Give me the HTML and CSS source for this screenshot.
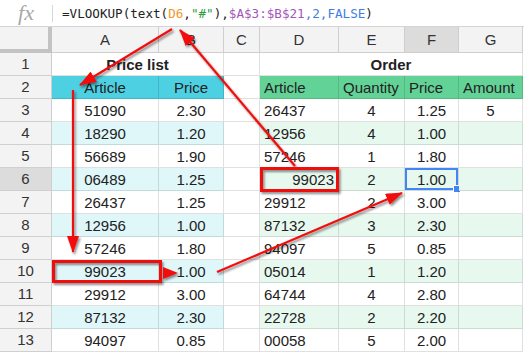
FILE: index.html
```html
<!DOCTYPE html>
<html lang="en">
<head>
  <meta charset="UTF-8">
  <title>VLOOKUP with text()</title>
  <link rel="stylesheet" href="styles.css">
</head>
<body>
<div class="sheet">
  <div class="formula-bar">
    <div class="fx">fx</div>
    <div class="sep"></div>
    <div class="formula">=VLOOKUP(text(<span class="f-ref">D6</span>,<span class="f-str">"#"</span>),<span class="f-range">$A$3:$B$21</span><span class="f-num">,2,FALSE</span>)</div>
  </div>

  <div class="grid">
    <div class="corner"></div>
    <div class="ch">A</div><div class="ch">B</div><div class="ch">C</div><div class="ch">D</div>
    <div class="ch">E</div><div class="ch sel">F</div><div class="ch">G</div>

    <div class="rh">1</div>
    <div class="c title span2">Price list</div><div class="c"></div>
    <div class="c title span4">Order</div>

    <div class="rh">2</div>
    <div class="c pl-head mid">Article</div><div class="c pl-head mid">Price</div><div class="c"></div>
    <div class="c or-head">Article</div><div class="c or-head">Quantity</div><div class="c or-head">Price</div><div class="c or-head">Amount</div>

    <div class="rh">3</div>
    <div class="c mid">51090</div><div class="c mid">2.30</div><div class="c"></div>
    <div class="c">26437</div><div class="c mid">4</div><div class="c mid">1.25</div><div class="c mid">5</div>

    <div class="rh">4</div>
    <div class="c pl-alt mid">18290</div><div class="c pl-alt mid">1.20</div><div class="c"></div>
    <div class="c or-alt">12956</div><div class="c or-alt mid">4</div><div class="c or-alt mid">1.00</div><div class="c or-alt"></div>

    <div class="rh">5</div>
    <div class="c mid">56689</div><div class="c mid">1.90</div><div class="c"></div>
    <div class="c">57246</div><div class="c mid">1</div><div class="c mid">1.80</div><div class="c"></div>

    <div class="rh sel">6</div>
    <div class="c pl-alt mid">06489</div><div class="c pl-alt mid">1.25</div><div class="c"></div>
    <div class="c or-alt end">99023</div><div class="c or-alt mid">2</div><div class="c or-alt mid active">1.00<span class="handle"></span></div><div class="c or-alt"></div>

    <div class="rh">7</div>
    <div class="c mid">26437</div><div class="c mid">1.25</div><div class="c"></div>
    <div class="c">29912</div><div class="c mid">2</div><div class="c mid">3.00</div><div class="c"></div>

    <div class="rh">8</div>
    <div class="c pl-alt mid">12956</div><div class="c pl-alt mid">1.00</div><div class="c"></div>
    <div class="c or-alt">87132</div><div class="c or-alt mid">3</div><div class="c or-alt mid">2.30</div><div class="c or-alt"></div>

    <div class="rh">9</div>
    <div class="c mid">57246</div><div class="c mid">1.80</div><div class="c"></div>
    <div class="c">94097</div><div class="c mid">5</div><div class="c mid">0.85</div><div class="c"></div>

    <div class="rh">10</div>
    <div class="c pl-alt mid">99023</div><div class="c pl-alt mid">1.00</div><div class="c"></div>
    <div class="c or-alt">05014</div><div class="c or-alt mid">1</div><div class="c or-alt mid">1.20</div><div class="c or-alt"></div>

    <div class="rh">11</div>
    <div class="c mid">29912</div><div class="c mid">3.00</div><div class="c"></div>
    <div class="c">64744</div><div class="c mid">4</div><div class="c mid">2.80</div><div class="c"></div>

    <div class="rh">12</div>
    <div class="c pl-alt mid">87132</div><div class="c pl-alt mid">2.30</div><div class="c"></div>
    <div class="c or-alt">22728</div><div class="c or-alt mid">2</div><div class="c or-alt mid">2.20</div><div class="c or-alt"></div>

    <div class="rh">13</div>
    <div class="c mid">94097</div><div class="c mid">0.85</div><div class="c"></div>
    <div class="c">00058</div><div class="c mid">5</div><div class="c mid">2.00</div><div class="c"></div>
  </div>

  <!-- red callouts drawn over the sheet -->
  <svg class="notes" width="524" height="353" viewBox="0 0 524 353">
    <defs>
      <filter id="shadow" x="-20%" y="-20%" width="140%" height="140%">
        <feDropShadow dx="1.5" dy="2" stdDeviation="1.2" flood-color="#000" flood-opacity="0.45"/>
      </filter>
      <marker id="head" markerUnits="userSpaceOnUse" markerWidth="18" markerHeight="12" refX="16" refY="6" orient="auto">
        <path d="M0,0 L17,6 L0,12 Z" fill="#f20c0c"/>
      </marker>
    </defs>
    <g filter="url(#shadow)">
      <line x1="133" y1="24" x2="217" y2="24" stroke="#1212d0" stroke-width="2.5"/>
    </g>
    <g filter="url(#shadow)" stroke="#f20c0c" stroke-width="2.2" fill="none">
      <line x1="172" y1="29" x2="80" y2="85" marker-end="url(#head)"/>
      <line x1="295" y1="166" x2="180" y2="30" marker-end="url(#head)"/>
      <line x1="73" y1="90" x2="73" y2="252" marker-end="url(#head)"/>
      <line x1="217" y1="272" x2="402" y2="193" marker-end="url(#head)"/>
      <rect x="53.5" y="261.5" width="107" height="20" stroke-width="3"/>
      <rect x="261.5" y="168.5" width="76" height="22" stroke-width="3"/>
      <path d="M163,267 L178,273 L163,279 Z" fill="#f20c0c" stroke="none"/>
    </g>
  </svg>
</div>
</body>
</html>
```

FILE: styles.css
```css
body { margin: 0; background: #fff; font-family: "Liberation Sans", Arial, sans-serif; }
.sheet { position: relative; width: 524px; height: 353px; overflow: hidden; }

.formula-bar { display: flex; align-items: center; height: 26px; border-bottom: 1px solid #d4d4d4; }
.fx { width: 52px; text-align: center; font-family: "Liberation Serif", serif; font-style: italic; font-size: 22px; color: #a8a8a8; line-height: 26px; }
.sep { width: 1px; height: 17px; background: #d6d6d6; }
.formula { padding-left: 9px; font-family: "DejaVu Sans Mono", monospace; font-size: 12.6px; color: #222; white-space: nowrap; }
.f-ref { color: #f19a2a; }
.f-str { color: #2f9c3c; }
.f-range { color: #a257b8; }
.f-num { color: #3f7ee0; }

.grid { display: grid; grid-template-columns: 52px 107px 65px 36px 79px 66px 54px 64px; grid-template-rows: 26px repeat(13, 23px); font-size: 15px; color: #222; }
.grid > div { box-sizing: border-box; border-right: 1px solid rgba(0,0,0,0.12); border-bottom: 1px solid rgba(0,0,0,0.12); white-space: nowrap; }

.corner { background: #f3f3f3; border-right: 4px solid #c3c3c3 !important; border-bottom: 4px solid #c3c3c3 !important; }
.ch { background: #f3f3f3; text-align: center; line-height: 25px; color: #333; border-color: #cfcfcf !important; }
.rh { background: #f3f3f3; text-align: center; line-height: 22px; color: #333; border-color: #cfcfcf !important; }
.ch.sel, .rh.sel { background: #dcdcdc; }

.c { position: relative; padding: 1px 4px 0; line-height: 21px; }
.mid { text-align: center; }
.end { text-align: right; }
.title { font-weight: bold; text-align: center; }
.span2 { grid-column: span 2; }
.span4 { grid-column: span 4; }

.pl-head { background: #4dd0e1; }
.pl-alt { background: #e0f7fa; }
.or-head { background: #63d297; }
.or-alt { background: #e7f9ef; }

.active { box-shadow: inset 0 0 0 2px #4285f4; }
.handle { position: absolute; right: -3px; bottom: -3px; width: 6px; height: 6px; background: #4285f4; border: 1px solid #fff; }

.notes { position: absolute; left: 0; top: 0; pointer-events: none; }
```
